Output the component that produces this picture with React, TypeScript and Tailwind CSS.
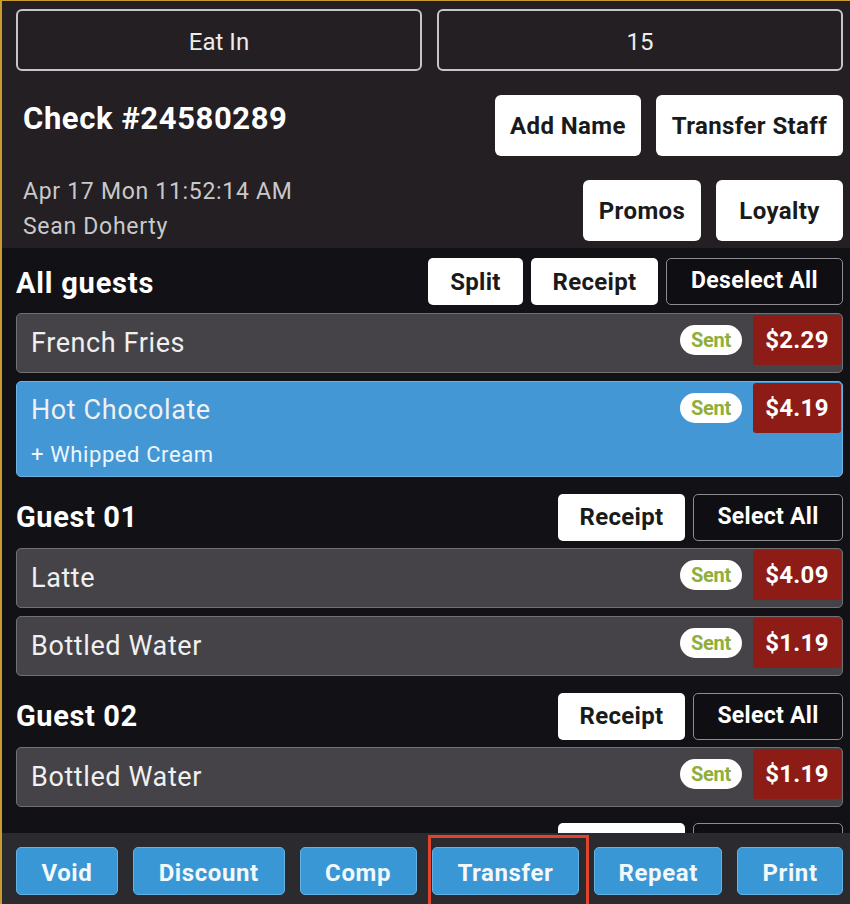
import React from "react";

type Item = { name: string; price: string; mod?: string; selected?: boolean };

const Row = ({ item }: { item: Item }) => (
  <div
    className={
      "flex justify-between rounded-[5px] border " +
      (item.selected
        ? "bg-[#4397d5] border-[#6fb3e3] h-[96px]"
        : "bg-[#454348] border-[#727075] h-[60px] items-stretch")
    }
  >
    <div className={"flex flex-col pl-[14px] " + (item.selected ? "pt-[13px]" : "justify-center")}>
      <span className="text-[27px] leading-[30px] tracking-[0.6px] text-[#f0f0f0]">{item.name}</span>
      {item.mod && (
        <span className="text-[22px] leading-[26px] tracking-[0.6px] text-[#eef6fc] mt-[17px]">{item.mod}</span>
      )}
    </div>
    <div className="flex items-start pt-[1px] pr-[1px]">
      <div className="mt-[10px] h-[30px] w-[62px] rounded-full bg-white flex items-center justify-center mr-[11px]">
        <span className="text-[20px] font-bold text-[#8fae3c] tracking-[-0.3px]">Sent</span>
      </div>
      <div className="h-[50px] w-[88px] bg-[#8e1c16] rounded-[3px] flex items-center justify-center">
        <span className="text-[24px] font-bold tracking-[0.3px] text-white">{item.price}</span>
      </div>
    </div>
  </div>
);

const WhiteBtn = ({ label, w }: { label: string; w: string }) => (
  <div className={"h-[47px] rounded-[5px] bg-white flex items-center justify-center " + w}>
    <span className="text-[24px] font-bold tracking-[0.3px] text-[#1a1a1a]">{label}</span>
  </div>
);

const DarkBtn = ({ label, w }: { label: string; w: string }) => (
  <div
    className={
      "h-[47px] rounded-[5px] bg-[#0f0e13] border border-[#8d8c90] flex items-center justify-center " + w
    }
  >
    <span className="text-[23px] font-bold tracking-[0.3px] text-white">{label}</span>
  </div>
);

const BlueBtn = ({ label, w }: { label: string; w: string }) => (
  <div
    className={
      "h-[48px] rounded-[5px] bg-[#3897d4] border border-[#64b2e3] flex items-center justify-center pt-[3px] " + w
    }
  >
    <span className="text-[24px] font-bold tracking-[0.6px] text-[#f2f8fc]">{label}</span>
  </div>
);

const BigWhite = ({ label, w }: { label: string; w: string }) => (
  <div className={"h-[61px] rounded-[6px] bg-white flex items-center justify-center " + w}>
    <span className="text-[24px] font-bold tracking-[0.4px] text-[#1a1a1a]">{label}</span>
  </div>
);

export default function App() {
  return (
    <div className="w-[850px] h-[904px] overflow-hidden flex flex-col bg-[#121116] border-l-2 border-t border-[#c99a2e] font-['Roboto','Liberation_Sans',sans-serif] relative">
      {/* Header */}
      <div className="bg-[#231f22] pl-[14px] pr-[7px] pt-[8px] h-[247px] shrink-0">
        <div className="grid grid-cols-2 gap-[15px]">
          <div className="h-[62px] rounded-[6px] border-2 border-[#c6c5c7] flex items-center justify-center pt-[3px]">
            <span className="text-[24px] text-[#ececec]">Eat In</span>
          </div>
          <div className="h-[62px] rounded-[6px] border-2 border-[#c6c5c7] flex items-center justify-center pt-[3px]">
            <span className="text-[24px] text-[#ececec]">15</span>
          </div>
        </div>
        <div className="flex justify-between items-center mt-[24px] h-[61px]">
          <span className="pl-[7px] text-[31px] font-bold text-white tracking-[0.6px] -mt-[12px]">
            Check #24580289
          </span>
          <div className="flex gap-[15px]">
            <BigWhite label="Add Name" w="w-[146px]" />
            <BigWhite label="Transfer Staff" w="w-[187px]" />
          </div>
        </div>
        <div className="flex justify-between items-center mt-[24px] h-[61px]">
          <div className="pl-[7px] flex flex-col -mt-[4px]">
            <span className="text-[23px] leading-[35px] tracking-[0.7px] text-[#c9c8ca]">Apr 17 Mon 11:52:14 AM</span>
            <span className="text-[23px] leading-[35px] tracking-[0.7px] text-[#c9c8ca]">Sean Doherty</span>
          </div>
          <div className="flex gap-[15px]">
            <BigWhite label="Promos" w="w-[118px]" />
            <BigWhite label="Loyalty" w="w-[127px]" />
          </div>
        </div>
      </div>

      {/* List */}
      <div className="flex-1 overflow-hidden pl-[14px] pr-[7px] pt-[10px]">
        <div className="flex flex-col gap-[8px]">
          <div className="flex justify-between items-center h-[47px]">
            <span className="text-[29px] font-bold tracking-[0.8px] text-white pt-[4px]">All guests</span>
            <div className="flex gap-[8px]">
              <WhiteBtn label="Split" w="w-[95px]" />
              <WhiteBtn label="Receipt" w="w-[127px]" />
              <DarkBtn label="Deselect All" w="w-[177px]" />
            </div>
          </div>
          <Row item={{ name: "French Fries", price: "$2.29" }} />
          <Row item={{ name: "Hot Chocolate", price: "$4.19", mod: "+ Whipped Cream", selected: true }} />
        </div>

        {[
          { g: "Guest 01", items: [{ name: "Latte", price: "$4.09" }, { name: "Bottled Water", price: "$1.19" }] },
          { g: "Guest 02", items: [{ name: "Bottled Water", price: "$1.19" }] },
        ].map((s) => (
          <div key={s.g} className="flex flex-col gap-[7px] mt-[16px]">
            <div className="flex justify-between items-center h-[48px]">
              <span className="text-[29px] font-bold tracking-[0.6px] text-white pt-[2px]">{s.g}</span>
              <div className="flex gap-[8px]">
                <WhiteBtn label="Receipt" w="w-[127px]" />
                <DarkBtn label="Select All" w="w-[150px]" />
              </div>
            </div>
            <div className="flex flex-col gap-[8px]">
              {s.items.map((it, i) => (
                <Row key={i} item={it} />
              ))}
            </div>
          </div>
        ))}
        {/* next guest header, mostly hidden behind the action bar */}
        <div className="flex justify-end gap-[8px] mt-[16px]">
          <div className="h-[47px] w-[127px] rounded-[5px] bg-white" />
          <div className="h-[47px] w-[150px] rounded-[5px] bg-[#0f0e13] border border-[#8d8c90]" />
        </div>
      </div>

      {/* Bottom bar */}
      <div className="h-[71px] shrink-0 bg-[#2b2a2f] pl-[14px] pr-[7px] pt-[14px] relative">
        <div className="flex gap-[15px]">
          <BlueBtn label="Void" w="w-[102px]" />
          <BlueBtn label="Discount" w="w-[152px]" />
          <BlueBtn label="Comp" w="w-[117px]" />
          <BlueBtn label="Transfer" w="w-[148px]" />
          <BlueBtn label="Repeat" w="w-[128px]" />
          <BlueBtn label="Print" w="w-[106px]" />
        </div>
        <div className="absolute left-[426px] top-[2px] w-[161px] h-[75px] border-[3px] border-[#e2442b]" />
      </div>
    </div>
  );
}
